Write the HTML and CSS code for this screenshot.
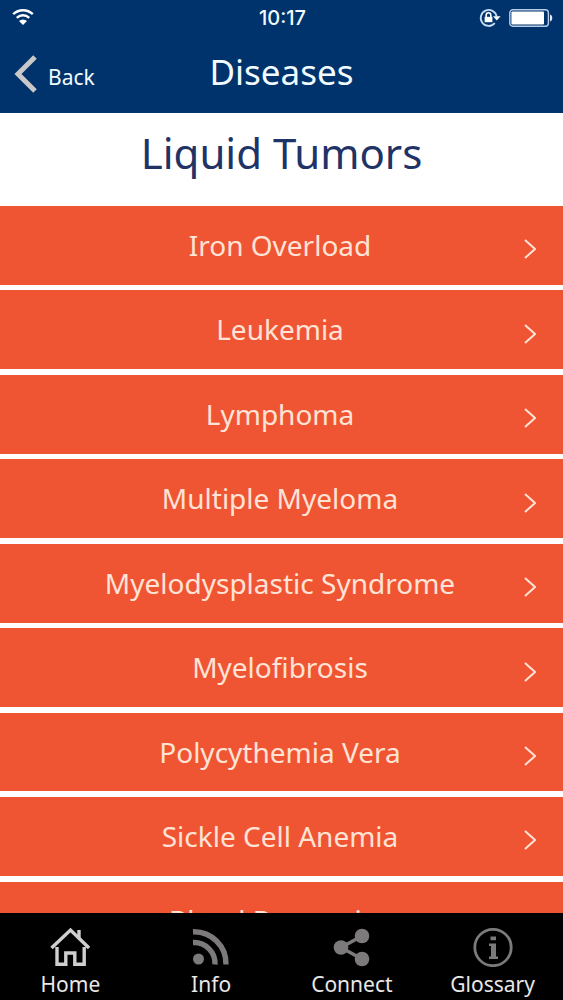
FILE: index.html
```html
<!DOCTYPE html>
<html lang="en">
<head>
<meta charset="utf-8">
<meta name="viewport" content="width=device-width, initial-scale=1">
<title>Diseases</title>
<link rel="stylesheet" href="styles.css">
</head>
<body>
<div class="app">
  <header class="header">
    <div class="status">
      <svg class="wifi" width="22" height="18" viewBox="0 0 22 18" fill="none" stroke="#fff" stroke-width="2.4"><path d="M1.2 6.2a14 14 0 0 1 19.6 0M4.8 9.8a9 9 0 0 1 12.4 0"/><path d="M11 17l-4-4a5.8 5.8 0 0 1 8 0z" fill="#fff" stroke="none"/></svg>
      <span class="time">10:17</span>
      <span class="indicators">
        <svg width="22" height="20" viewBox="0 0 22 20" fill="none" stroke="#c5dcf5" stroke-width="1.8"><path d="M15.8 15.2A8 8 0 1 1 17.6 8.500"/><path d="M14 8.200h7.600l-3.800 4.200z" fill="#fff" stroke="none"/><path d="M7.200 9V7a2.300 2.300 0 0 1 4.600 0v2" stroke="#fff" stroke-width="1.600"/><path d="M5.600 8.800h7.800v5.400H5.600z" fill="#fff" stroke="none"/></svg>
        <svg width="44" height="18" viewBox="0 0 44 18"><rect x=".8" y=".8" width="38.6" height="16.4" rx="3" fill="none" stroke="#b9cde8" stroke-width="1.4"/><rect x="2.4" y="2.4" width="32.6" height="13.2" rx="1" fill="#fff"/><path d="M41 5.500c3 .8 3 6.200 0 7z" fill="#dce8f8"/></svg>
      </span>
    </div>
    <div class="nav">
      <button class="back" type="button">
        <svg width="24" height="38" viewBox="0 0 24 38" fill="none" stroke="#c9c9c9" stroke-width="5"><path d="M22 2L5 19l17 17"/></svg>
        <span>Back</span>
      </button>
      <h1 class="title">Diseases</h1>
    </div>
  </header>
  <main class="content">
    <h2 class="heading">Liquid Tumors</h2>
    <nav class="list" aria-label="Liquid Tumors">
      <a class="row" href="#"><span>Iron Overload</span><svg class="chevron" viewBox="0 0 12 20"><path d="M1 1l10 9-10 9"/></svg></a>
      <a class="row" href="#"><span>Leukemia</span><svg class="chevron" viewBox="0 0 12 20"><path d="M1 1l10 9-10 9"/></svg></a>
      <a class="row" href="#"><span>Lymphoma</span><svg class="chevron" viewBox="0 0 12 20"><path d="M1 1l10 9-10 9"/></svg></a>
      <a class="row" href="#"><span>Multiple Myeloma</span><svg class="chevron" viewBox="0 0 12 20"><path d="M1 1l10 9-10 9"/></svg></a>
      <a class="row" href="#"><span>Myelodysplastic Syndrome</span><svg class="chevron" viewBox="0 0 12 20"><path d="M1 1l10 9-10 9"/></svg></a>
      <a class="row" href="#"><span>Myelofibrosis</span><svg class="chevron" viewBox="0 0 12 20"><path d="M1 1l10 9-10 9"/></svg></a>
      <a class="row" href="#"><span>Polycythemia Vera</span><svg class="chevron" viewBox="0 0 12 20"><path d="M1 1l10 9-10 9"/></svg></a>
      <a class="row" href="#"><span>Sickle Cell Anemia</span><svg class="chevron" viewBox="0 0 12 20"><path d="M1 1l10 9-10 9"/></svg></a>
      <a class="row" href="#"><span>Blood Dyscrasias</span><svg class="chevron" viewBox="0 0 12 20"><path d="M1 1l10 9-10 9"/></svg></a>
    </nav>
  </main>
  <nav class="tabs" aria-label="Main">
    <a class="tab active" href="#">
      <svg width="40" height="40" viewBox="0 0 40 40" fill="none" stroke="currentColor" stroke-width="3.4"><path d="M1.500 21L20.500 3l18.500 18M7 20v17.300h8.800V26h9v11.300h9.400V20"/><path d="M29 3v8"/></svg>
      <span>Home</span>
    </a>
    <a class="tab" href="#">
      <svg width="40" height="40" viewBox="0 0 40 40" fill="none" stroke="currentColor" stroke-width="5.4"><path d="M2 4.700A32 32 0 0 1 35 37.500M2 15.500A21 21 0 0 1 24 37.500"/><circle cx="7.500" cy="32" r="5.500" fill="currentColor" stroke="none"/></svg>
      <span>Info</span>
    </a>
    <a class="tab" href="#">
      <svg width="40" height="40" viewBox="0 0 40 40" fill="currentColor" stroke="currentColor" stroke-width="3.5"><path d="M30 9L9 20.500 30 32" fill="none"/><g stroke="none"><circle cx="30" cy="9" r="7.300"/><circle cx="9" cy="20.500" r="7.300"/><circle cx="30" cy="32" r="7.300"/></g></svg>
      <span>Connect</span>
    </a>
    <a class="tab" href="#">
      <svg width="40" height="40" viewBox="0 0 40 40" fill="none" stroke="currentColor" stroke-width="2.8"><circle cx="20" cy="20.500" r="18.200"/><path d="M17.500 9.500h5.500v3.800h-5.500zM16 16.500h7v13h2v2.500h-9v-2.500h2v-10.500h-2z" fill="currentColor" stroke="none"/></svg>
      <span>Glossary</span>
    </a>
  </nav>
</div>
</body>
</html>
```
FILE: styles.css
```css
* { box-sizing: border-box; }

body {
  margin: 0;
  background: #fff;
  font-family: "Noto Sans", "Open Sans", sans-serif;
}

a { color: inherit; text-decoration: none; }
svg { display: block; flex: none; }

.app {
  display: flex;
  flex-direction: column;
  height: 100vh;
  overflow: hidden;
}

.header {
  flex: none;
  padding-bottom: 8px;
  background: #00336b;
  color: #f2fbff;
}

.status {
  display: grid;
  grid-template-columns: 1fr auto 1fr;
  align-items: center;
  height: 36px;
  padding: 0 10px 0 12px;
}

.wifi { margin-bottom: 2px; }

.time {
  font: 500 20px/24px Inter, "Liberation Sans", sans-serif;
}

.indicators {
  display: flex;
  align-items: center;
  justify-content: flex-end;
  gap: 8px;
}

.nav {
  display: grid;
  grid-template-columns: 1fr auto 1fr;
  height: 69px;
  padding: 0 13px;
}

.back {
  display: flex;
  align-items: center;
  justify-self: start;
  gap: 11px;
  height: 76px;
  padding: 0;
  border: 0;
  background: none;
  color: inherit;
  font: 21px/28px "Noto Sans", sans-serif;
}

.back span { padding-top: 6px; }

.title {
  margin: 0;
  font-size: 35px;
  font-weight: 400;
  line-height: 72px;
}

.content {
  flex: 1;
  min-height: 0;
  overflow: hidden;
}

.heading {
  margin: 0;
  padding: 10px 0 23px;
  color: #1f3366;
  font-size: 42px;
  font-weight: 400;
  line-height: 60px;
  text-align: center;
}

.list {
  display: grid;
  grid-auto-rows: 14vw;
  gap: 1vw;
}

.row {
  display: grid;
  grid-template-columns: 1fr auto 1fr;
  align-items: center;
  padding: 0 27px 0 24px;
  background: #f05533;
  color: #ffe3d6;
  font-size: 28px;
  line-height: 38px;
}

.row span {
  grid-column: 2;
  padding-bottom: 1px;
}

.chevron {
  justify-self: end;
  width: 12px;
  height: 20px;
  margin-top: 8px;
  fill: none;
  stroke: #ffe3d6;
  stroke-width: 2;
}

.tabs {
  display: grid;
  flex: none;
  grid-template-columns: repeat(4, 1fr);
  height: 87px;
  padding-top: 14px;
  background: #000;
}

.tab {
  display: flex;
  flex-direction: column;
  align-items: center;
  gap: 3px;
  color: #7c7a7b;
  font-size: 21px;
  line-height: 28px;
}

.tab.active { color: #cfcfcf; }
.tab span { color: #e8e8e8; }
```
